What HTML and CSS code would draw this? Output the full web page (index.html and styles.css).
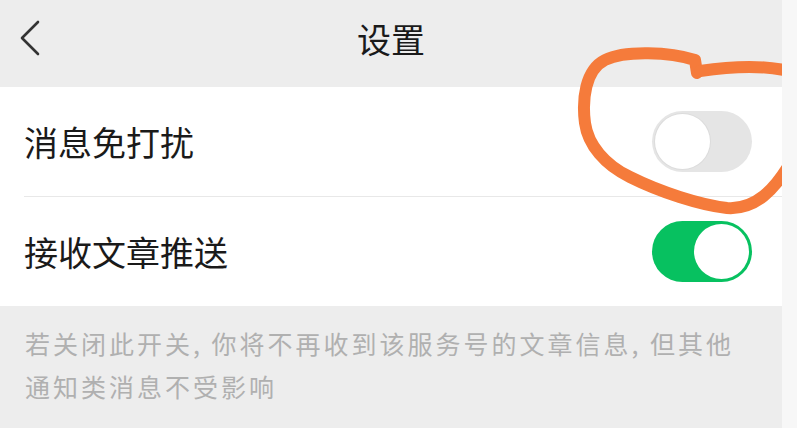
FILE: index.html
```html
<!DOCTYPE html>
<html lang="zh-CN">

<head>
    <meta charset="UTF-8">
    <meta name="viewport" content="width=device-width, initial-scale=1.0">
    <title>设置</title>
    <link rel="stylesheet" href="styles.css">
</head>

<body>
    <div class="screen">
        <div class="page">
            <header class="nav">
                <svg class="back" width="24" height="36" viewBox="0 0 24 36">
                    <path d="M20 2 L4 18 L20 34" fill="none" stroke="#333" stroke-width="2.6" stroke-linecap="round" stroke-linejoin="round" />
                </svg>
                <h1 class="title">设置</h1>
            </header>
            <section class="group">
                <div class="cell">
                    <span class="label">消息免打扰</span>
                    <span class="switch"></span>
                </div>
                <div class="cell">
                    <span class="label">接收文章推送</span>
                    <span class="switch on"></span>
                </div>
            </section>
            <p class="tip">若关闭此开关, 你将不再收到该服务号的文章信息, 但其他<br>通知类消息不受影响</p>
            <!-- 手画的圈 -->
            <svg class="mark" width="782" height="428" viewBox="0 0 782 428">
                <g fill="none" stroke="#f57b3b" stroke-width="12" stroke-linecap="round" stroke-linejoin="round">
                    <path d="M697 73 L695 60 C670 52 625 50 605 60 C585 70 582 100 585 123 C588 145 605 165 630 177 C660 192 700 205 727 208 C755 210 775 190 792 160" />
                    <path d="M700 71 C720 68 760 63 792 72" />
                </g>
            </svg>
        </div>
        <div class="edge"></div>
    </div>
</body>

</html>
```

FILE: styles.css
```css
* {
    margin: 0;
    padding: 0;
    box-sizing: border-box;
}

body {
    width: 797px;
    height: 428px;
    overflow: hidden;
    font-family: "Noto Sans CJK SC", "Noto Sans", sans-serif;
    background-color: #f7f7f7;
}

.screen {
    display: flex;
    height: 428px;
}

.page {
    position: relative;
    width: 782px;
    height: 428px;
    overflow: hidden;
    background-color: #ededed;
}

.edge {
    flex: 1;
    background-color: #f7f7f7;
}

.nav {
    position: relative;
    display: flex;
    justify-content: center;
    height: 87px;
    padding-top: 18px;
}

.back {
    position: absolute;
    left: 18px;
    top: 20px;
}

.title {
    font-size: 34px;
    font-weight: 400;
    line-height: 42px;
    color: #1a1a1a;
}

.group {
    background-color: #fff;
}

.cell {
    display: flex;
    align-items: center;
    justify-content: space-between;
    height: 109px;
    margin-left: 24px;
    padding-right: 30px;
}

.cell + .cell {
    height: 110px;
    border-top: 1px solid #e8e8e8;
}

.label {
    font-size: 34px;
    color: #1a1a1a;
}

.switch {
    position: relative;
    width: 100px;
    height: 61px;
    border-radius: 31px;
    background-color: #e5e5e5;
}

.switch::after {
    content: '';
    position: absolute;
    top: 3px;
    left: 3px;
    width: 55px;
    height: 55px;
    border-radius: 50%;
    background-color: #fff;
    box-shadow: 0 0 0 1px #dcdcdc;
}

.switch.on {
    background-color: #07c160;
}

.switch.on::after {
    left: auto;
    right: 3px;
    box-shadow: none;
}

.tip {
    padding: 16px 0 0 25px;
    font-size: 25px;
    letter-spacing: 3px;
    line-height: 43px;
    white-space: nowrap;
    color: #b0b0b0;
}

.mark {
    position: absolute;
    left: 0;
    top: 0;
    pointer-events: none;
}
```
